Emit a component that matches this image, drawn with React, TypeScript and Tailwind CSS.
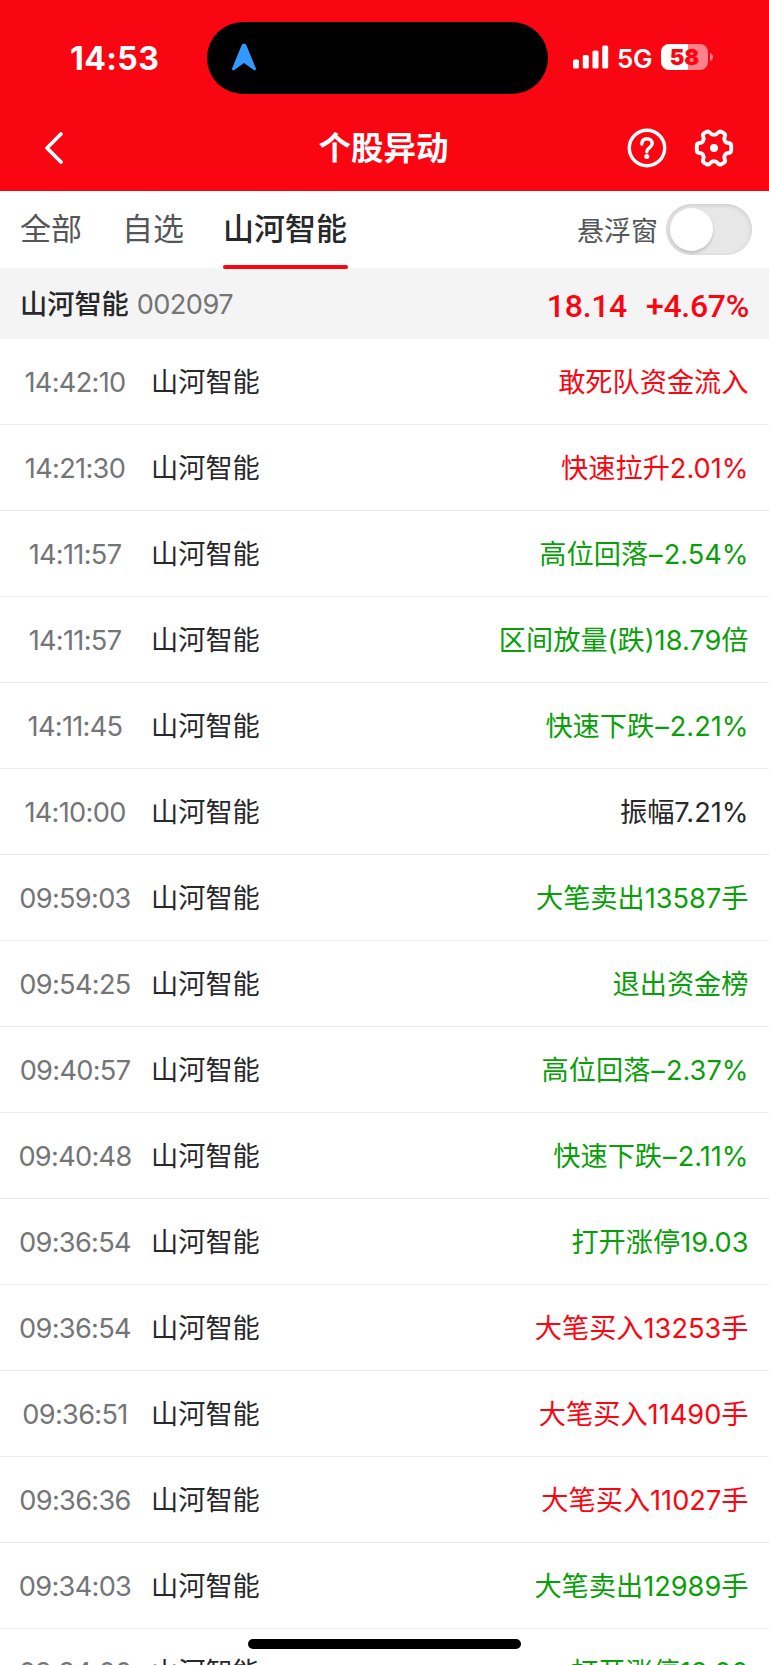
import clsx from "clsx";

type Tone = "up" | "down" | "flat";

const STOCK = "山河智能";

const EVENTS: { time: string; text: string; tone: Tone }[] = [
  { time: "14:42:10", text: "敢死队资金流入", tone: "up" },
  { time: "14:21:30", text: "快速拉升2.01%", tone: "up" },
  { time: "14:11:57", text: "高位回落–2.54%", tone: "down" },
  { time: "14:11:57", text: "区间放量(跌)18.79倍", tone: "down" },
  { time: "14:11:45", text: "快速下跌–2.21%", tone: "down" },
  { time: "14:10:00", text: "振幅7.21%", tone: "flat" },
  { time: "09:59:03", text: "大笔卖出13587手", tone: "down" },
  { time: "09:54:25", text: "退出资金榜", tone: "down" },
  { time: "09:40:57", text: "高位回落–2.37%", tone: "down" },
  { time: "09:40:48", text: "快速下跌–2.11%", tone: "down" },
  { time: "09:36:54", text: "打开涨停19.03", tone: "down" },
  { time: "09:36:54", text: "大笔买入13253手", tone: "up" },
  { time: "09:36:51", text: "大笔买入11490手", tone: "up" },
  { time: "09:36:36", text: "大笔买入11027手", tone: "up" },
  { time: "09:34:03", text: "大笔卖出12989手", tone: "down" },
  { time: "09:34:00", text: "打开涨停19.00", tone: "down" },
];

const TONES: Record<Tone, string> = {
  up: "text-[#fa0512]",
  down: "text-[#0a9f0a]",
  flat: "text-[#27282a]",
};

function StatusBar() {
  return (
    <div className="flex h-[94px] items-end">
      <div className="flex h-[72px] w-[207px] items-center pl-[70px] pt-[1px] text-[32px] font-bold leading-none tracking-[0.4px]">
        14:53
      </div>
      <div className="flex h-[72px] w-[341px] items-center rounded-full bg-black pl-[24px]">
        <svg className="mb-[3px]" width="26" height="28" viewBox="0 0 26 28" fill="#3399ff">
          <path d="M13 0.800c1.200 0 2 .6 2.600 2l9.200 22.400c.6 1.600-.7 2.700-2.100 1.700L13 20 3.300 26.900c-1.400 1-2.700-.1-2.100-1.700L10.400 2.800C11 1.400 11.800.8 13 .8z" />
        </svg>
      </div>
      <div className="flex h-[72px] items-center pl-[25px]">
        <svg className="mb-[2px]" width="36" height="24" viewBox="0 0 36 24" fill="#fff">
          <rect x="0" y="14.500" width="6" height="9" rx="1.600" />
          <rect x="9.800" y="10" width="6" height="13.500" rx="1.600" />
          <rect x="19.500" y="5.500" width="6" height="18" rx="1.600" />
          <rect x="29.200" y="0.500" width="6" height="23" rx="1.600" />
        </svg>
        <span className="ml-[8px] w-[36px] pt-[1px] text-[26px] font-semibold leading-none tracking-[-0.4px]">5G</span>
        <div className="mb-[2px] ml-[8px] flex h-[26px] w-[47px] items-center justify-center rounded-[8px] bg-linear-to-r from-white from-58% to-[#ff8288] to-58% text-[22px] font-black leading-none text-[#fa0512]">
          58
        </div>
        <svg className="mb-[2px] ml-[2px]" width="3" height="8" viewBox="0 0 3 8" fill="#ff8288">
          <path d="M0 0c4 1.500 4 6.500 0 8z" />
        </svg>
      </div>
    </div>
  );
}

function NavBar() {
  return (
    <div className="flex h-[97px] items-center pt-[10px]">
      <div className="flex w-[206px] pl-[44px]">
        <svg width="20" height="32" viewBox="0 0 20 32" fill="none" stroke="#fff" strokeWidth="3.800" strokeLinecap="round" strokeLinejoin="round">
          <path d="M17 2 3 16l14 14" />
        </svg>
      </div>
      <h1 className="flex-1 pt-[4px] text-center text-[32.500px] font-bold leading-none">个股异动</h1>
      <div className="flex w-[208px] items-center gap-[27px] pl-[66px]">
        <svg width="40" height="40" viewBox="0 0 40 40" fill="none" stroke="#fff" strokeWidth="3.400" strokeLinecap="round" strokeLinejoin="round">
          <circle cx="20" cy="20" r="17.700" />
          <path d="M14.800 16c0-3.400 2.200-5.300 5.200-5.300s5.200 2 5.200 4.900c0 4.300-5.400 4.300-5.400 8.200" />
          <circle cx="19.800" cy="28.500" r="2.500" fill="#fff" stroke="none" />
        </svg>
        <svg width="40" height="40" viewBox="0 0 40 40" fill="none" stroke="#fff" strokeWidth="3.900" strokeLinejoin="round">
          <path d="M12.500 3.800q2.200-1.200 3.800 1.200 1.200 1.800 3.700 1.800t3.700-1.800q1.600-2.400 3.800-1.200l2.300 1.400q2.100 1.300.9 3.700-1 2 .2 4.100 1.200 2 3.500 2 2.800.2 2.800 2.800v4.400q0 2.600-2.800 2.800-2.300 0-3.500 2-1.200 2.100-.2 4.100 1.200 2.400-.9 3.700l-2.300 1.400q-2.200 1.200-3.800-1.200-1.200-1.800-3.700-1.800t-3.700 1.800q-1.600 2.400-3.800 1.200l-2.300-1.400q-2.100-1.300-.9-3.700 1-2-.2-4.100-1.200-2-3.500-2-2.800-.2-2.800-2.800v-4.400q0-2.600 2.800-2.800 2.300 0 3.500-2 1.200-2.100.2-4.100-1.200-2.400.9-3.700z" />
          <circle cx="20" cy="20" r="4" fill="#fff" stroke="none" />
        </svg>
      </div>
    </div>
  );
}

function Tabs() {
  return (
    <div className="flex h-[77px] pl-[20px] text-[31px] leading-[76px] text-[#555658]">
      <span className="w-[102px]">全部</span>
      <span className="w-[101px]">自选</span>
      <div className="relative font-medium text-[#27282a]">
        {STOCK}
        <span className="absolute bottom-[-1px] left-0 h-[4px] w-[125px] rounded-[2px] bg-[#fa0512]" />
      </div>
      <div className="ml-auto flex items-center pr-[17px]">
        <span className="pt-[4px] text-[27px]">悬浮窗</span>
        <div className="ml-[8px] flex h-[51px] w-[86px] items-center rounded-full bg-[#e7e7e7] pl-[4px] shadow-[inset_0_1px_4px_rgba(0,0,0,0.14)]">
          <div className="h-[43px] w-[43px] rounded-full bg-white shadow-[0_2px_3px_rgba(0,0,0,0.18)]" />
        </div>
      </div>
    </div>
  );
}

function Quote() {
  return (
    <div className="flex h-[71px] items-center bg-[#f4f4f4] pl-[20px] pr-[20px] pt-[4px] text-[27.200px]">
      <span className="font-medium text-[#27282a]">{STOCK}</span>
      <span className="ml-[8px] tracking-[-0.600px] text-[#747577]">002097</span>
      <div className="ml-auto flex gap-[19px] font-['Roboto'] text-[32px] font-medium tracking-[-0.300px] text-[#fa0512]">
        <span>18.14</span>
        <span>+4.67%</span>
      </div>
    </div>
  );
}

export default function App() {
  return (
    <div className="relative h-[1665px] w-[769px] overflow-hidden bg-white font-['Inter','Noto_Sans_CJK_SC',sans-serif]">
      <header className="bg-[#fa0512] text-white">
        <StatusBar />
        <NavBar />
      </header>
      <Tabs />
      <Quote />
      <ul>
        {EVENTS.map((e, i) => (
          <li key={i} className="flex h-[86px] items-center border-b border-[#ebebeb] pr-[20.500px] pt-[4px] text-[27.200px]">
            <span className="w-[151px] pr-[1px] text-center tracking-[-0.700px] text-[#747577]">{e.time}</span>
            <span className="text-[#27282a]">{STOCK}</span>
            <span className={clsx("ml-auto", TONES[e.tone])}>
              {e.text.split("–").map((part, n) => (
                <span key={n}>
                  {n > 0 && <span className="mx-[1px]">–</span>}
                  {part}
                </span>
              ))}
            </span>
          </li>
        ))}
      </ul>
      <div className="absolute left-[248px] top-[1639px] h-[10px] w-[273px] rounded-full bg-black" />
    </div>
  );
}
